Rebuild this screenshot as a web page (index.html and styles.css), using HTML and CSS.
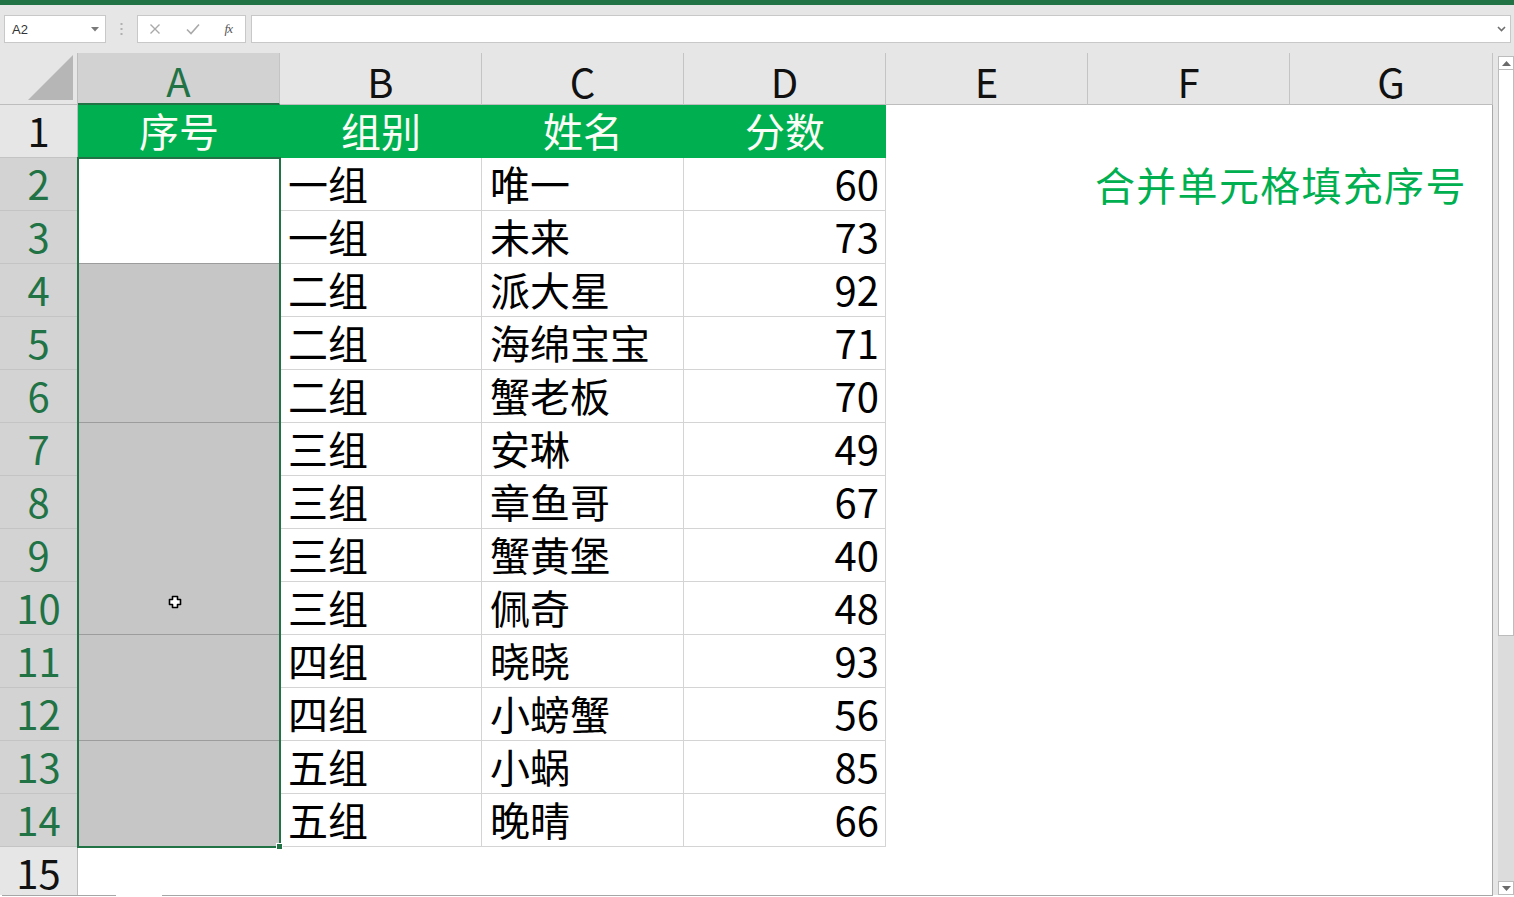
FILE: index.html
```html
<!DOCTYPE html>
<html lang="zh">
<head>
<meta charset="utf-8">
<title>合并单元格填充序号</title>
<link rel="stylesheet" href="styles.css">
</head>
<body>
<div class="topbar"></div>
<div class="toolbar">
  <div class="namebox"><span class="ref">A2</span>
    <svg class="dd" width="8" height="5" viewBox="0 0 8 5"><path d="M0 0H8L4 4.5Z" fill="#7a7a7a"/></svg>
  </div>
  <div class="grip">
    <svg width="3" height="12" viewBox="0 0 3 12"><rect x="0.5" y="0" width="2" height="2" fill="#b0b0b0"/><rect x="0.5" y="5" width="2" height="2" fill="#b0b0b0"/><rect x="0.5" y="10" width="2" height="2" fill="#b0b0b0"/></svg>
  </div>
  <div class="fxbox">
    <svg width="12" height="12" viewBox="0 0 12 12"><path d="M1.5 1.5L10.5 10.5M10.5 1.5L1.5 10.5" stroke="#a9a9a9" stroke-width="1.4" fill="none"/></svg>
    <svg width="14" height="12" viewBox="0 0 14 12"><path d="M1 6.5L5 10.5L13 1.5" stroke="#a9a9a9" stroke-width="1.6" fill="none"/></svg>
    <span class="fx">fx</span>
  </div>
  <div class="formula">
    <svg width="9" height="6" viewBox="0 0 9 6"><path d="M1 1L4.5 4.5L8 1" stroke="#6f6f6f" stroke-width="1.6" fill="none"/></svg>
  </div>
</div>
<div class="sheet">
  <div class="grid">
    <div class="corner"><svg width="46" height="46" viewBox="0 0 46 46"><path d="M45 0V45H0Z" fill="#b6b6b6"/></svg></div>
    <div class="ch sel">A</div><div class="ch">B</div><div class="ch">C</div><div class="ch">D</div><div class="ch">E</div><div class="ch">F</div><div class="ch lastc">G</div>

    <div class="rh">1</div><div class="hd">序号</div><div class="hd">组别</div><div class="hd">姓名</div><div class="hd">分数</div><div class="e"></div><div class="e"></div><div class="e lastc"></div>

    <div class="rh sel">2</div><div class="m active span2"></div><div class="c">一组</div><div class="c">唯一</div><div class="c num">60</div><div class="e"></div><div class="e title">合并单元格填充序号</div><div class="e lastc"></div>
    <div class="rh sel">3</div><div class="c">一组</div><div class="c">未来</div><div class="c num">73</div><div class="e"></div><div class="e"></div><div class="e lastc"></div>
    <div class="rh sel">4</div><div class="m span3"></div><div class="c">二组</div><div class="c">派大星</div><div class="c num">92</div><div class="e"></div><div class="e"></div><div class="e lastc"></div>
    <div class="rh sel">5</div><div class="c">二组</div><div class="c">海绵宝宝</div><div class="c num">71</div><div class="e"></div><div class="e"></div><div class="e lastc"></div>
    <div class="rh sel">6</div><div class="c">二组</div><div class="c">蟹老板</div><div class="c num">70</div><div class="e"></div><div class="e"></div><div class="e lastc"></div>
    <div class="rh sel">7</div><div class="m span4"></div><div class="c">三组</div><div class="c">安琳</div><div class="c num">49</div><div class="e"></div><div class="e"></div><div class="e lastc"></div>
    <div class="rh sel">8</div><div class="c">三组</div><div class="c">章鱼哥</div><div class="c num">67</div><div class="e"></div><div class="e"></div><div class="e lastc"></div>
    <div class="rh sel">9</div><div class="c">三组</div><div class="c">蟹黄堡</div><div class="c num">40</div><div class="e"></div><div class="e"></div><div class="e lastc"></div>
    <div class="rh sel">10</div><div class="c">三组</div><div class="c">佩奇</div><div class="c num">48</div><div class="e"></div><div class="e"></div><div class="e lastc"></div>
    <div class="rh sel">11</div><div class="m span2"></div><div class="c">四组</div><div class="c">晓晓</div><div class="c num">93</div><div class="e"></div><div class="e"></div><div class="e lastc"></div>
    <div class="rh sel">12</div><div class="c">四组</div><div class="c">小螃蟹</div><div class="c num">56</div><div class="e"></div><div class="e"></div><div class="e lastc"></div>
    <div class="rh sel">13</div><div class="m span2"></div><div class="c">五组</div><div class="c">小蜗</div><div class="c num">85</div><div class="e"></div><div class="e"></div><div class="e lastc"></div>
    <div class="rh sel">14</div><div class="c">五组</div><div class="c">晚晴</div><div class="c num">66</div><div class="e"></div><div class="e"></div><div class="e lastc"></div>

    <div class="rh">15</div><div class="e"></div><div class="e"></div><div class="e"></div><div class="e"></div><div class="e"></div><div class="e"></div><div class="e lastc"></div>

    <div class="selection"></div>
    <div class="handle"></div>
    <svg class="cursor" width="14" height="14" viewBox="0 0 14 14"><path d="M4.5 1.5H9.5V4.5H12.5V9.5H9.5V12.5H4.5V9.5H1.5V4.5H4.5Z" fill="#fff" stroke="#000" stroke-width="1.6" stroke-linejoin="round"/></svg>
  </div>
  <div class="vscroll">
    <div class="sbtn"><svg width="9" height="5" viewBox="0 0 9 5"><path d="M0 5H9L4.5 0Z" fill="#6a6a6a"/></svg></div>
    <div class="thumb"></div>
    <div class="track"></div>
    <div class="sbtn"><svg width="9" height="5" viewBox="0 0 9 5"><path d="M0 0H9L4.5 5Z" fill="#6a6a6a"/></svg></div>
  </div>
</div>
<div class="tabbar">
  <div class="seg seg1"></div>
  <div class="gapseg"></div>
  <div class="seg seg2"></div>
</div>
</body>
</html>
```
FILE: styles.css
```css
html, body {
  margin: 0;
  padding: 0;
  width: 1514px;
  height: 897px;
  overflow: hidden;
  background: #e6e6e6;
  font-family: "Noto Sans CJK SC", "Noto Sans", sans-serif;
}

.topbar {
  height: 5px;
  background: #217346;
}

.toolbar {
  height: 48px;
  box-sizing: border-box;
  padding-top: 10px;
  display: flex;
  align-items: flex-start;
  background: #e6e6e6;
}

.namebox {
  margin-left: 4px;
  width: 102px;
  height: 28px;
  box-sizing: border-box;
  background: #fff;
  border: 1px solid #c8c8c8;
  display: flex;
  align-items: center;
  justify-content: space-between;
  padding: 0 6px 0 7px;
}

.ref {
  font-family: "Liberation Sans", "Noto Sans", sans-serif;
  font-size: 13px;
  color: #333;
}

.grip {
  width: 31px;
  height: 28px;
  display: flex;
  align-items: center;
  justify-content: center;
}

.fxbox {
  width: 109px;
  height: 28px;
  box-sizing: border-box;
  background: #fff;
  border: 1px solid #c8c8c8;
  display: flex;
  align-items: center;
  justify-content: space-between;
  padding: 0 13px 0 11px;
}

.fx {
  font-family: "Liberation Serif", serif;
  font-style: italic;
  font-size: 13px;
  color: #555;
  letter-spacing: -1px;
}

.formula {
  margin-left: 5px;
  width: 1260px;
  height: 28px;
  box-sizing: border-box;
  background: #fff;
  border: 1px solid #c8c8c8;
  display: flex;
  align-items: center;
  justify-content: flex-end;
  padding-right: 4px;
}

.sheet {
  height: 842px;
  display: flex;
  align-items: flex-start;
  overflow: hidden;
}

.grid {
  position: relative;
  display: grid;
  grid-template-columns: 78px repeat(6, 202px) 203px;
  grid-template-rows: 52px repeat(15, 53px);
  background: #fff;
  font-size: 40px;
  line-height: 1;
  color: #000;
}

.grid > div {
  box-sizing: border-box;
  display: flex;
  align-items: center;
  white-space: nowrap;
  padding-bottom: 2px;
}

.corner {
  background: #e6e6e6;
  border-right: 1px solid #bdbdbd;
  border-bottom: 1px solid #bdbdbd;
  align-items: flex-end !important;
  justify-content: flex-end;
  padding: 0 3px 3px 0 !important;
}

.corner svg {
  display: block;
}

.ch {
  background: #e6e6e6;
  border-right: 1px solid #c4c4c4;
  border-bottom: 1px solid #bdbdbd;
  justify-content: center;
  padding-top: 4px;
  padding-bottom: 0 !important;
  color: #111;
}

.ch.sel {
  background: #d2d2d2;
  color: #217346;
  border-bottom: 2px solid #217346;
}

.rh {
  background: #e6e6e6;
  border-right: 1px solid #bdbdbd;
  border-bottom: 1px solid #c4c4c4;
  justify-content: center;
  color: #111;
}

.rh.sel {
  background: #d3d3d3;
  color: #217346;
}

.hd {
  background: #00b050;
  color: #fbfdf6;
  justify-content: center;
  padding-bottom: 3px !important;
}

.c {
  border-right: 1px solid #d4d4d4;
  border-bottom: 1px solid #d4d4d4;
  padding-left: 8px;
}

.c.num {
  justify-content: flex-end;
  padding-left: 0;
  padding-right: 6px;
}

.m {
  background: #c6c6c6;
  border-bottom: 1px solid #9c9c9c;
}

.m.active {
  background: #fff;
}

.span2 { grid-row: span 2; }
.span3 { grid-row: span 3; }
.span4 { grid-row: span 4; }

.e {
  background: #fff;
}

.lastc {
  border-right: 1px solid #a8a8a8;
}

.ch.lastc {
  border-right: 1px solid #c4c4c4;
}

.title {
  color: #00b050;
  padding-left: 7px;
  letter-spacing: 1.3px;
  overflow: visible;
  position: relative;
  z-index: 1;
}

.selection {
  position: absolute;
  left: 77px;
  top: 104px;
  width: 204px;
  height: 691px;
  border: 2px solid #217346;
  box-sizing: border-box;
  pointer-events: none;
}

.handle {
  position: absolute;
  left: 276px;
  top: 790px;
  width: 7px;
  height: 7px;
  background: #217346;
  border: 1px solid #fff;
  box-sizing: border-box;
  padding: 0 !important;
}

.cursor {
  position: absolute;
  left: 168px;
  top: 542px;
}

.vscroll {
  margin-left: 5px;
  margin-top: 3px;
  width: 16px;
  height: 839px;
  display: flex;
  flex-direction: column;
  background: #dcdcdc;
}

.sbtn {
  height: 14px;
  box-sizing: border-box;
  background: #fff;
  border: 1px solid #bcbcbc;
  display: flex;
  align-items: center;
  justify-content: center;
}

.thumb {
  height: 566px;
  box-sizing: border-box;
  background: #fff;
  border: 1px solid #bcbcbc;
  border-top: none;
}

.track {
  flex: 1;
  background: #dcdcdc;
}

.tabbar {
  height: 3px;
  display: flex;
  align-items: flex-start;
  background: #fff;
}

.seg {
  height: 3px;
  border-top: 1px solid #a6a6a6;
  box-sizing: border-box;
}

.seg1 {
  margin-left: 2px;
  width: 114px;
}

.gapseg {
  width: 46px;
}

.seg2 {
  width: 1331px;
}
```
